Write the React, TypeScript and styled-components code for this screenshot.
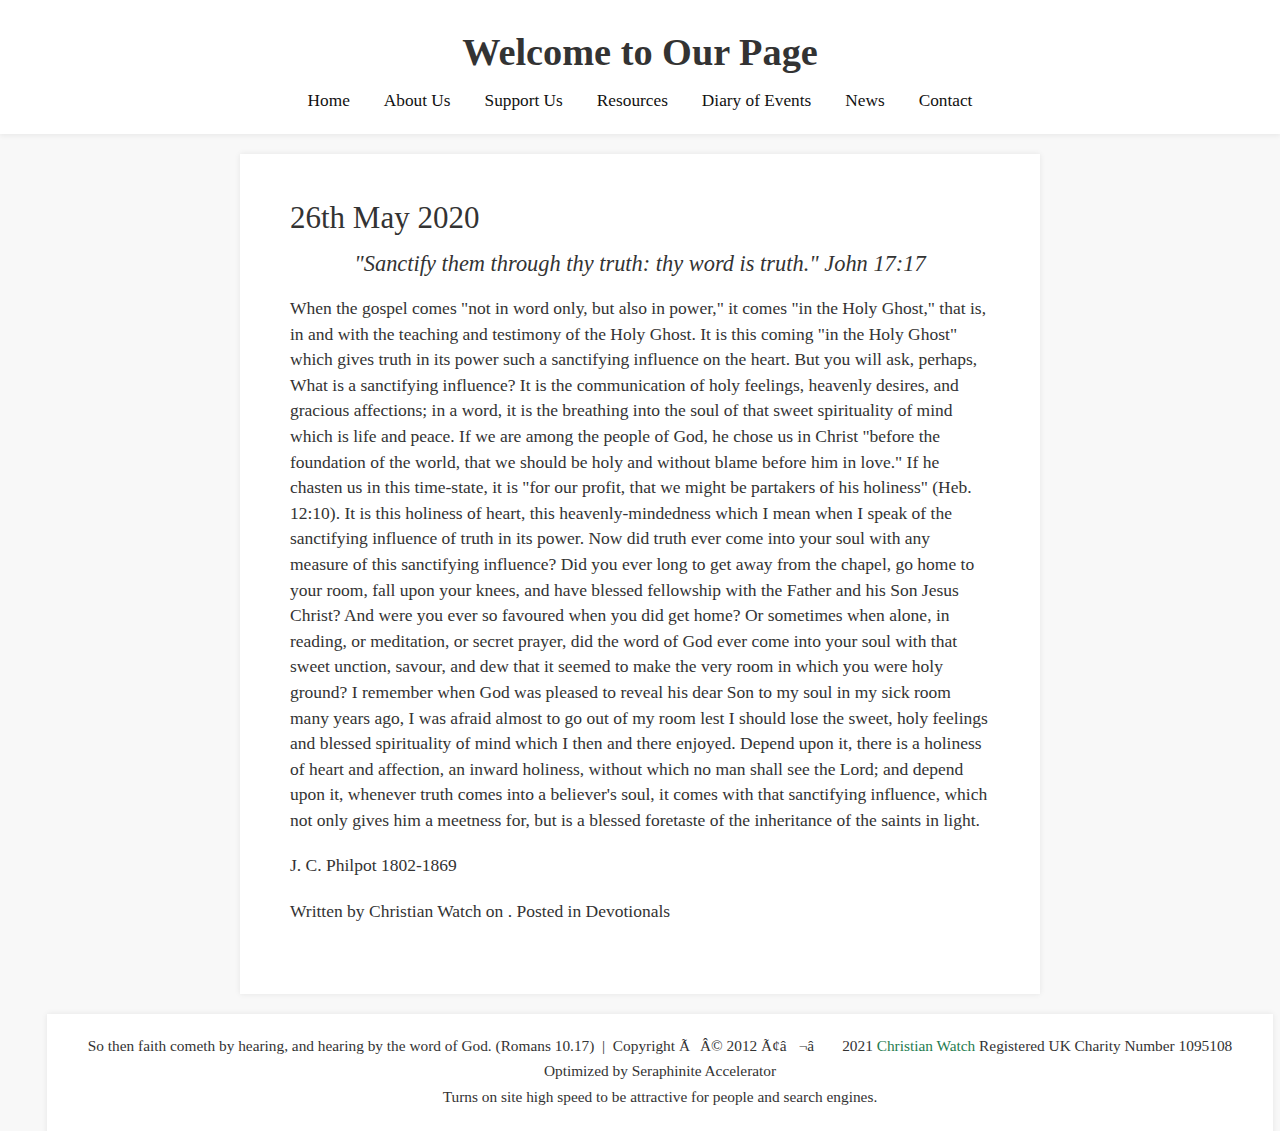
import React from "react";
import styled, { createGlobalStyle } from "styled-components";

const GlobalStyle = createGlobalStyle`
  html, body {
    margin: 0;
    padding: 0;
    background: #f8f8f8;
    font-family: "Liberation Serif", "Times New Roman", serif;
    color: #333;
  }
`;

const Header = styled.header`
  background: #fff;
  box-shadow: 0 2px 5px rgba(0, 0, 0, 0.06);
  padding: 30px 0 21px;
  text-align: center;
`;

const SiteTitle = styled.h1`
  margin: 0;
  font-size: 38.3px;
  line-height: 44px;
  font-weight: 700;
  color: #333;
`;

const NavList = styled.ul`
  list-style: none;
  margin: 15px 0 0;
  padding: 0;
  display: flex;
  justify-content: center;
  gap: 34px;
`;

const NavLink = styled.a`
  font-size: 17.3px;
  line-height: 24px;
  color: #111;
  text-decoration: none;
`;

const Card = styled.main`
  width: 800px;
  box-sizing: border-box;
  margin: 20px auto 0;
  background: #fff;
  box-shadow: 0 0 6px rgba(0, 0, 0, 0.08);
  padding: 46px 50px 69px;
`;

const DateTitle = styled.h2`
  margin: 0;
  font-size: 31px;
  line-height: 36px;
  font-weight: 400;
  color: #333;
`;

const Verse = styled.p`
  margin: 13px 0 0;
  font-size: 22.4px;
  line-height: 30px;
  font-style: italic;
  text-align: center;
  color: #333;
`;

const Para = styled.p<{ $gap?: number }>`
  margin: ${(p) => p.$gap ?? 20}px 0 0;
  font-size: 17.5px;
  line-height: 25.6px;
  color: #333;
  white-space: nowrap;
`;

const Footer = styled.footer`
  margin: 20px 7px 0 47px;
  background: #fff;
  box-shadow: 0 0 6px rgba(0, 0, 0, 0.08);
  padding: 19px 0 30px;
  text-align: center;
`;

const FooterLine = styled.div`
  font-size: 15.35px;
  line-height: 25.5px;
  color: #333;
`;

const Gap = styled.span<{ $w: number }>`
  display: inline-block;
  width: ${(p) => p.$w}px;
`;

const GreenLink = styled.a`
  color: #1e7b4e;
  text-decoration: none;
`;

const navItems = [
  "Home",
  "About Us",
  "Support Us",
  "Resources",
  "Diary of Events",
  "News",
  "Contact",
];

const bodyLines = [
  'When the gospel comes "not in word only, but also in power," it comes "in the Holy Ghost," that is,',
  'in and with the teaching and testimony of the Holy Ghost. It is this coming "in the Holy Ghost"',
  "which gives truth in its power such a sanctifying influence on the heart. But you will ask, perhaps,",
  "What is a sanctifying influence? It is the communication of holy feelings, heavenly desires, and",
  "gracious affections; in a word, it is the breathing into the soul of that sweet spirituality of mind",
  'which is life and peace. If we are among the people of God, he chose us in Christ "before the',
  'foundation of the world, that we should be holy and without blame before him in love." If he',
  'chasten us in this time-state, it is "for our profit, that we might be partakers of his holiness" (Heb.',
  "12:10). It is this holiness of heart, this heavenly-mindedness which I mean when I speak of the",
  "sanctifying influence of truth in its power. Now did truth ever come into your soul with any",
  "measure of this sanctifying influence? Did you ever long to get away from the chapel, go home to",
  "your room, fall upon your knees, and have blessed fellowship with the Father and his Son Jesus",
  "Christ? And were you ever so favoured when you did get home? Or sometimes when alone, in",
  "reading, or meditation, or secret prayer, did the word of God ever come into your soul with that",
  "sweet unction, savour, and dew that it seemed to make the very room in which you were holy",
  "ground? I remember when God was pleased to reveal his dear Son to my soul in my sick room",
  "many years ago, I was afraid almost to go out of my room lest I should lose the sweet, holy feelings",
  "and blessed spirituality of mind which I then and there enjoyed. Depend upon it, there is a holiness",
  "of heart and affection, an inward holiness, without which no man shall see the Lord; and depend",
  "upon it, whenever truth comes into a believer's soul, it comes with that sanctifying influence, which",
  "not only gives him a meetness for, but is a blessed foretaste of the inheritance of the saints in light.",
];

export default function App() {
  return (
    <>
      <GlobalStyle />
      <Header>
        <SiteTitle>Welcome to Our Page</SiteTitle>
        <nav>
          <NavList>
            {navItems.map((item) => (
              <li key={item}>
                <NavLink href="#">{item}</NavLink>
              </li>
            ))}
          </NavList>
        </nav>
      </Header>
      <Card>
        <DateTitle>26th May 2020</DateTitle>
        <Verse>"Sanctify them through thy truth: thy word is truth." John 17:17</Verse>
        <Para $gap={17}>
          {bodyLines.map((line, i) => (
            <React.Fragment key={i}>
              {line}
              {i < bodyLines.length - 1 && <br />}
            </React.Fragment>
          ))}
        </Para>
        <Para>J. C. Philpot 1802-1869</Para>
        <Para>Written by Christian Watch on . Posted in Devotionals</Para>
      </Card>
      <Footer>
        <FooterLine>
          So then faith cometh by hearing, and hearing by the word of God. (Romans 10.17)
          {"\u00a0 |\u00a0 "}Copyright Ã<Gap $w={10} />Â© 2012 Ã¢â<Gap $w={12} />¬â
          <Gap $w={28} />2021 <GreenLink href="#">Christian Watch</GreenLink> Registered UK
          Charity Number 1095108
        </FooterLine>
        <FooterLine>Optimized by Seraphinite Accelerator</FooterLine>
        <FooterLine>Turns on site high speed to be attractive for people and search engines.</FooterLine>
      </Footer>
    </>
  );
}
